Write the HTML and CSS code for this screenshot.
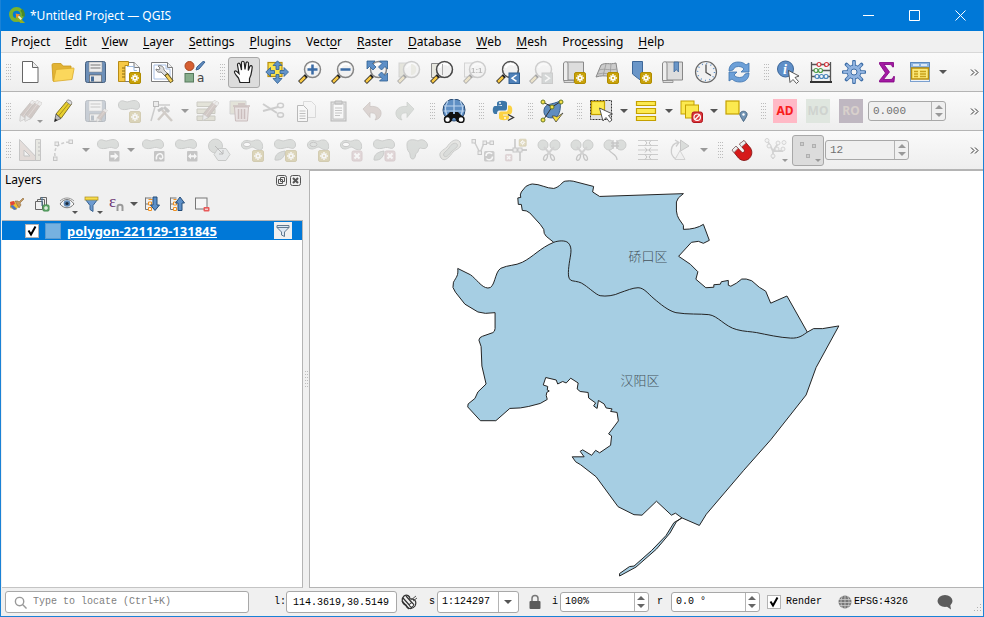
FILE: index.html
```html
<!DOCTYPE html>
<html lang="en">
<head>
<meta charset="utf-8">
<title>*Untitled Project — QGIS</title>
<link rel="stylesheet" href="styles.css">
</head>
<body>
<svg class="defs" aria-hidden="true">
  <defs>
    <g id="star"><rect x="12.5" y="12.5" width="11" height="11" rx="1.5" fill="#c9a20a" stroke="#b08c00"/><path d="M18 14v8M14 18h8M15.500 15.500l5 5M20.500 15.500l-5 5" stroke="#fff" stroke-width="1.500"/><circle cx="18" cy="18" r="1" fill="#c9a20a"/></g>
    <g id="cross"><rect x="13" y="13" width="10" height="10" rx="1.500" fill="#dba0a8" stroke="#c08088"/><path d="M15.500 15.500l5 5M20.500 15.500l-5 5" stroke="#fff" stroke-width="2"/></g>
    <g id="lens"><path d="M8.500 15.500L1.500 22.500" stroke="#222" stroke-width="4"/><path d="M7 17L2 22" stroke="#f6c744" stroke-width="2.500"/><circle cx="14.500" cy="9.500" r="8" fill="#f1f1f1" stroke="#858585" stroke-width="1.500"/><path d="M9.500 8a5.500 5.500 0 0 1 9-2.500" fill="none" stroke="#fff" stroke-width="2"/></g>
    <path id="blob" d="M1.500 6C1.500 2 5 1 8 2.500C11 4 13 1.500 17 1.500C21 1.500 22.500 4 22.500 7C22.500 10 20 11 17.500 10C14 8.500 13 10 9 10.500C4 11 1.500 9.500 1.500 6Z" fill="#a9b5ab" stroke="#7d857f"/>
    <path id="ring" d="M1.500 7C1.500 3 6 1.500 10 3C13 4 14 1.500 18 2C21.500 2.500 23 6 22.500 10C22 13 17 12 14 9.500C11 8 10 11 6 11C3 11 1.500 9.500 1.500 7Z" fill="#a9b5ab" stroke="#7d857f"/>
    <g id="disk"><rect x="1.500" y="1.500" width="20" height="21" rx="2" fill="#6d8fb8" stroke="#46607f"/><rect x="5" y="2" width="13" height="10" fill="#eee" stroke="#888" stroke-width=".5"/><path d="M6.500 5h10M6.500 8h10" stroke="#777"/><rect x="5.500" y="15" width="12" height="7" fill="#e8e8e8" stroke="#555" stroke-width=".6"/><rect x="7" y="16.500" width="3" height="5" fill="#4a6e98"/></g>
    <g id="brownpen"><path d="M3.500 15.500L15 1.500L20 4L9 19.500L3 22Z" fill="#a87868" stroke="#765" stroke-width=".8"/><path d="M15 1.500l5 2.500l-2 3l-5-3Z" fill="#ddd"/><path d="M3.500 16l5 3.500L3 22.500Z" fill="#ddd" stroke="#888" stroke-width=".5"/><path d="M6 17.500L17 3" stroke="#c9a89a"/></g>
    <g id="scroll"><path d="M4.500 2h17v18h-17Z" fill="#ddd" stroke="#888"/><path d="M1.500 4c0-3 4.500-3 4.500 0v16.500h-4.500Z" fill="#eee" stroke="#888"/><path d="M2 22.500h10v-2H2Z" fill="#ddd" stroke="#888" stroke-width=".8"/></g>
    <g id="snip"><circle cx="6" cy="7" r="5" fill="#a9b5ab" stroke="#7d857f"/><circle cx="18" cy="7" r="5" fill="#a9b5ab" stroke="#7d857f"/><path d="M7 9l7 8M17 9l-7 8" stroke="#999" stroke-width="2"/><ellipse cx="8.500" cy="19.500" rx="1.600" ry="3" transform="rotate(25 8.500 19.500)" fill="none" stroke="#777" stroke-width="1.300"/><ellipse cx="15.500" cy="19.500" rx="1.600" ry="3" transform="rotate(-25 15.500 19.500)" fill="none" stroke="#777" stroke-width="1.300"/></g>
  </defs>

  <symbol id="i-logo" viewBox="0 0 18 18"><circle cx="8" cy="8" r="6" fill="none" stroke="#7ab32e" stroke-width="4"/><path d="M13 3A7 7 0 0 1 15 10" fill="none" stroke="#4c8a28" stroke-width="3"/><path d="M8 8l9 9h-5l-5-6Z" fill="#93b023"/><path d="M7 7l5 1l-4 4Z" fill="#f08a24"/><path d="M10 10l3 3" stroke="#eef3d0" stroke-width="2"/></symbol>
  <symbol id="i-new" viewBox="0 0 24 24"><path d="M4.500 1.500h10l5.500 6v15h-15.500Z" fill="#fff" stroke="#666"/><path d="M14.500 1.500v6h5.500" fill="#eee" stroke="#666"/></symbol>
  <symbol id="i-open" viewBox="0 0 24 24"><path d="M1 5q0-1.500 1.500-1.500H10l2 2.500h8v3L3 21H2Z" fill="#e2b334" stroke="#c9981a" stroke-width=".8"/><path d="M5 9.500L22.500 8q.8 0 .5 1L21 19.500L2.500 21.500Z" fill="#fbd75c" stroke="#d9a92a" stroke-width=".8"/></symbol>
  <symbol id="i-save" viewBox="0 0 24 24"><use href="#disk"/></symbol>
  <symbol id="i-layout" viewBox="0 0 24 24"><path d="M7 2.500h10l5.500 5v14H7Z" fill="#fff" stroke="#7d7d7d"/><path d="M17 2.500v5h5.500" fill="#eee" stroke="#7d7d7d"/><path d="M10 6.500h7v4h3" fill="none" stroke="#9fbbe0"/><path d="M1.500 1.500h10v4H8v16H1.500Z" fill="#f7c945" stroke="#b78b16"/><path d="M5 8h3M5 11h3M5 14h3M5 17h3" stroke="#8b6b10"/><use href="#star"/></symbol>
  <symbol id="i-manager" viewBox="0 0 24 24"><path d="M1.500 2.500h16l5 5v14h-21Z" fill="#fff" stroke="#7d7d7d"/><path d="M17.500 2.500v5h5" fill="#eee" stroke="#7d7d7d"/><path d="M4 5h12v4h4v10H4Z" fill="none" stroke="#a9c0e4"/><path d="M8 6c2-1 6 0 6 4l5 5l-2 3l-6-6c-3 1-5-1-5-3l3 1l1-2Z" fill="#ddd" stroke="#666" stroke-width=".8"/><path d="M16 14l6 8" stroke="#5c5320" stroke-width="4"/><path d="M16.500 15l5 6.500" stroke="#f6d05b" stroke-width="2.500"/></symbol>
  <symbol id="i-style" viewBox="0 0 24 24"><circle cx="6.500" cy="6" r="4.500" fill="#d65f32" stroke="#a84620"/><path d="M13 10l3-1l6-7l-2-.5l-6 5.500Z" fill="#5f8cc0" stroke="#355f92"/><rect x="2" y="13.500" width="8.500" height="8.500" fill="#87ad8c" stroke="#567a5c"/><text x="14" y="22" class="glyph">a</text></symbol>

  <symbol id="i-pan" viewBox="0 0 24 24"><path d="M8 22.500L6.500 18C4 15 2 13 2.500 11.500C3.500 10 5 11.500 7 13.500L5.500 5C5.300 3 7.500 2.500 8.200 4.500L9.500 10L9.500 2.500C9.700 .8 12 .8 12.200 2.500L13 9.500L14 3C14.500 1.300 16.700 1.800 16.500 3.500L16.300 10.500L17.800 6.500C18.500 5 20.500 5.500 20.200 7.500C19.500 12 19.500 15 17.500 18.500V22.500Z" fill="#fff" stroke="#222" stroke-width="1.200"/></symbol>
  <symbol id="i-panto" viewBox="0 0 24 24"><rect x="3" y="2.500" width="14" height="14" fill="#fbe34c" stroke="#b98f0c" stroke-width="1.200"/><path d="M12.500 .8L17 5.500H14V9.500H11V5.500H8ZM12.500 23.500L17 18.500H14V14.500H11V18.500H8ZM.8 12L5.500 7.500V10.500H9.500V13.500H5.500V16.500ZM23.500 12L19 7.500V10.500H15V13.500H19V16.500Z" fill="#6393c8" stroke="#2f5f92" stroke-width=".8"/></symbol>
  <symbol id="i-zin" viewBox="0 0 24 24"><use href="#lens"/><path d="M14.500 4.500v10M9.500 9.500h10" stroke="#3a6ba5" stroke-width="2.500"/></symbol>
  <symbol id="i-zout" viewBox="0 0 24 24"><use href="#lens"/><path d="M9.500 9.500h10" stroke="#3a6ba5" stroke-width="2.500"/></symbol>
  <symbol id="i-zfull" viewBox="0 0 24 24"><use href="#lens"/><path d="M3 1h8l-2.500 2.500l3.500 3.500l-3 3l-3.500-3.500L3 9ZM23.500 1h-8l2.500 2.500l-3.500 3.500l3 3l3.500-3.500l2.500 2.500ZM23.500 21h-8l2.500-2.500l-3.500-3.500l3-3l3.500 3.500l2.500-2.500Z" fill="#5d8fc7" stroke="#2f5f92" stroke-width=".8"/></symbol>
  <symbol id="i-zsel" viewBox="0 0 24 24"><rect x="2" y="3" width="11" height="14" fill="#c7c79a" stroke="#999"/><use href="#lens"/><path d="M14 4v11c7 0 7-11 0-11" fill="#d9d9b8"/></symbol>
  <symbol id="i-zlayer" viewBox="0 0 24 24"><path d="M1.500 3.500h11v14h-11Z" fill="#e8e8e0" stroke="#888"/><use href="#lens"/><path d="M12.500 4v11" stroke="#aaa"/><circle cx="14.500" cy="9.500" r="8" fill="none" stroke="#444" stroke-width="1.200"/></symbol>
  <symbol id="i-znative" viewBox="0 0 24 24"><rect x="1.500" y="3" width="10" height="14" fill="#eee" stroke="#999"/><use href="#lens"/><text x="8" y="13" class="glyph-s">1:1</text></symbol>
  <symbol id="i-zlast" viewBox="0 0 24 24"><use href="#lens"/><circle cx="14.500" cy="9.500" r="8" fill="none" stroke="#444"/><rect x="13" y="13" width="10.500" height="10.500" fill="#4f81b9" stroke="#2f5f92"/><path d="M20.500 15l-4.500 3.200l4.500 3.200" fill="none" stroke="#fff" stroke-width="1.500"/></symbol>
  <symbol id="i-znext" viewBox="0 0 24 24"><use href="#lens"/><rect x="13" y="13" width="10.500" height="10.500" fill="#9aa" stroke="#888"/><path d="M16 15l4.500 3.200l-4.500 3.200" fill="none" stroke="#fff" stroke-width="1.500"/></symbol>
  <symbol id="i-newmap" viewBox="0 0 24 24"><use href="#scroll"/><use href="#star"/></symbol>
  <symbol id="i-new3d" viewBox="0 0 24 24"><path d="M6 5c5-3 8 0 15-2l2 13c-8 2-12-2-22 1Z" fill="#ccc" stroke="#888"/><path d="M4 10c6-2 10 1 18-1M3 14c6-2 11 1 19-1M11 4L8 16M16 4l-1 12" fill="none" stroke="#999" stroke-width=".8"/><use href="#star"/></symbol>
  <symbol id="i-newbm" viewBox="0 0 24 24"><path d="M4.500 1.500h10v20L9.500 18L4.500 14Z" fill="#6a96c8" stroke="#3d6799"/><use href="#star"/></symbol>
  <symbol id="i-showbm" viewBox="0 0 24 24"><use href="#scroll"/><path d="M13 2h4.500v10l-2.200-2.500L13 12Z" fill="#6a96c8" stroke="#3d6799" stroke-width=".8"/></symbol>
  <symbol id="i-clock" viewBox="0 0 24 24"><circle cx="12" cy="12" r="10.500" fill="#f1f1f1" stroke="#666" stroke-width="1.200"/><circle cx="12" cy="12" r="8.500" fill="none" stroke="#5d8fc7" stroke-width="1.500" stroke-dasharray="1 3.450"/><path d="M12 4.500V12.500l5 3" fill="none" stroke="#444" stroke-width="1.200"/></symbol>
  <symbol id="i-refresh" viewBox="0 0 24 24"><path id="rf" d="M2 11C2 5 6 2 11 2c4 0 6 1 8 3l3-2v9h-8l3-3c-2-3-9-4-11 1Z" fill="#6da0d8" stroke="#3f73ad" stroke-width=".8"/><use href="#rf" transform="rotate(180 12 12)"/></symbol>

  <symbol id="i-info" viewBox="0 0 24 24"><circle cx="9.500" cy="9" r="8" fill="#5f8fc8" stroke="#3d6799"/><text x="7" y="14" class="glyph-i">i</text><path d="M12.500 10.500l1.500 12l3-3l3.500 4l2-2l-3.500-4l4-1.500Z" fill="#fff" stroke="#333" stroke-width=".8"/></symbol>
  <symbol id="i-abacus" viewBox="0 0 24 24"><path d="M2.500 2v20M21.500 2v20M2.500 4.500h19M2.500 10.500h19M2.500 16.500h19" stroke="#555" stroke-width="1.300"/><path d="M1 22h22" stroke="#333" stroke-width="2"/><g fill="#f6f6f6" stroke-width="1.200"><g stroke="#d2363c"><circle cx="10" cy="4.500" r="2"/><circle cx="17.500" cy="4.500" r="2"/></g><g stroke="#4f9f4a"><circle cx="7" cy="10.500" r="2"/><circle cx="11.500" cy="10.500" r="2"/></g><g stroke="#4b86bd"><circle cx="8" cy="16.500" r="2"/><circle cx="12.500" cy="16.500" r="2"/><circle cx="17" cy="16.500" r="2"/></g></g></symbol>
  <symbol id="i-gear" viewBox="0 0 24 24"><path d="M12 1.500v21M1.500 12h21M4.500 4.500l15 15M19.500 4.500l-15 15" stroke="#3f6fa8" stroke-width="3.600" stroke-linecap="round"/><circle cx="12" cy="12" r="7" fill="#8fb2df" stroke="#3f6fa8"/><path d="M12 2v20M2 12h20M5 5l14 14M19 5L5 19" stroke="#8fb2df" stroke-width="2" stroke-linecap="round"/><circle cx="12" cy="12" r="3" fill="#f4f4f4" stroke="#3f6fa8"/></symbol>
  <symbol id="i-sigma" viewBox="0 0 24 24"><path d="M4.500 2.500H18.500V7H17.500C17 5 16 4.500 14 4.500H9L14.500 12L8.500 19.500H15C17 19.500 18 18.500 18.500 16.500H19.500L19 22H4.500V20.500L10.500 13L4.500 4Z" fill="#a31aa3" stroke="#800080" stroke-width=".8"/></symbol>
  <symbol id="i-table" viewBox="0 0 24 24"><rect x="2.500" y="2.500" width="19" height="19" fill="#eef3fa" stroke="#7ba0cf"/><path d="M2.500 2.500h19v5h-19Z" fill="#8db4df" stroke="#5b88bd"/><path d="M5 5h6M13 5h6" stroke="#dce9f7" stroke-width="2"/><rect x="3.500" y="8" width="17" height="11" fill="#fbe97a" stroke="#b98f0c" stroke-width="1.500"/><path d="M6 11.500h4M12 11.500h6M6 14h4M12 14h6M6 16.500h4M12 16.500h6" stroke="#caa21c" stroke-width="1.300"/></symbol>

  <symbol id="i-edits" viewBox="0 0 24 24"><g transform="translate(-1 0)"><use href="#brownpen"/></g><g transform="translate(4 0)"><use href="#brownpen"/></g></symbol>
  <symbol id="i-pencil" viewBox="0 0 24 24"><path d="M5 15L15.500 2.500L20.500 5L10 19.500Z" fill="#e8cf2e" stroke="#75651a" stroke-width=".9"/><path d="M7.500 17L18 4" stroke="#a8921c"/><path d="M15 2.500L17 .8Q20.500 1 21 4l-1.500 2Z" fill="#ddd" stroke="#777" stroke-width=".7"/><path d="M5 15l5 4.500L3.500 22.500Z" fill="#bbb" stroke="#444" stroke-width=".7"/><path d="M4.200 19.500l2.300 1.700L3.500 22.800Z" fill="#222"/></symbol>
  <symbol id="i-saveedit" viewBox="0 0 24 24"><use href="#disk"/><g transform="translate(11 9) scale(.62)"><use href="#brownpen"/></g></symbol>
  <symbol id="i-addpoly" viewBox="0 0 24 24"><use href="#blob"/><use href="#star"/></symbol>
  <symbol id="i-vertex" viewBox="0 0 24 24"><path d="M1 22L5.500 6H20" fill="none" stroke="#888" stroke-width="1.500"/><rect x="3.500" y="2.500" width="5" height="5" fill="#ddd" stroke="#555"/><path d="M8 21L18 10M12 11l10 11" stroke="#a08870" stroke-width="2.500"/><path d="M14 8l5 5M8 12l5-3" stroke="#777" stroke-width="3"/></symbol>
  <symbol id="i-multi" viewBox="0 0 24 24"><path d="M2 3h18v4.500H2ZM2 10h18v4.500H2ZM2 17h18v4.500H2Z" fill="#c8c48e" stroke="#86835a"/><g transform="translate(5 0) scale(.95)"><use href="#brownpen"/></g></symbol>
  <symbol id="i-trash" viewBox="0 0 24 24"><path d="M2 2h16v13H2Z" fill="#c8c48e" stroke="#999"/><path d="M6.500 8h14l-1 14h-12Z" fill="#e4c4c4" stroke="#a05858"/><path d="M5 7h17M10 5h7M10.500 10v10M13.500 10v10M16.500 10v10" stroke="#a05858" stroke-width="1.500"/></symbol>
  <symbol id="i-cut" viewBox="0 0 24 24"><path d="M2 5l14 9M2 12l15-4" stroke="#888" stroke-width="2"/><ellipse cx="19.500" cy="6.500" rx="3" ry="2.200" fill="none" stroke="#888" stroke-width="1.500"/><ellipse cx="19.500" cy="16" rx="3" ry="2.200" fill="none" stroke="#888" stroke-width="1.500"/></symbol>
  <symbol id="i-copy" viewBox="0 0 24 24"><path d="M9.500 2.500h8l4 4v12h-12Z" fill="#f5f5f5" stroke="#aaa"/><path d="M3.500 6.500h6l4 4v12h-10Z" fill="#fff" stroke="#555"/><path d="M5.500 12h6M5.500 14.500h6M5.500 17h6M5.500 19.500h6" stroke="#666"/></symbol>
  <symbol id="i-paste" viewBox="0 0 24 24"><rect x="4" y="3" width="15" height="19" fill="#bbb" stroke="#555"/><path d="M6 5h11v15H6Z" fill="#fff" stroke="#777"/><path d="M8 2h7v3H8Z" fill="#999" stroke="#555"/><path d="M8 9h7M8 11.500h7M8 14h7M8 16.500h5" stroke="#777"/></symbol>
  <symbol id="i-undo" viewBox="0 0 24 24"><path d="M3 10l7-7v4.500c7-1 12 3 11 8c-.5 3-3 5-6 5.500c3-4 0-8-5-7v4.500Z" fill="#c39a8c" stroke="#8d6a5e" stroke-width=".7"/></symbol>
  <symbol id="i-redo" viewBox="0 0 24 24"><path d="M21 10l-7-7v4.500c-7-1-12 3-11 8c.5 3 3 5 6 5.500c-3-4 0-8 5-7v4.500Z" fill="#a5b7a5" stroke="#7d8d7d" stroke-width=".7"/></symbol>
  <symbol id="i-metasearch" viewBox="0 0 24 24"><circle cx="12" cy="11" r="11" fill="#5f8fc4" stroke="#2a4a70"/><path d="M2 7h20M1.500 12h21M12 0v15M6 2c-4 6-3 10-1 14M18 2c4 6 3 10 1 14" fill="none" stroke="#bcd4ee" stroke-width="1.200"/><path d="M8 13h3v2h2v-2h3l6 6l-3 4h-4l-2-4h-2l-2 4H6l-4-4Z" fill="#111"/><circle cx="5.500" cy="20.500" r="3" fill="#fff" stroke="#111" stroke-width="1.500"/><circle cx="19" cy="20.500" r="3" fill="#fff" stroke="#111" stroke-width="1.500"/></symbol>
  <symbol id="i-python" viewBox="0 0 24 24"><path d="M6 7V4c0-3 10-3 10 0v5c0 2-1 2.500-3 2.500H8.500C6.500 11.500 6 13 6 15H4C1 15 1 7 4 7h7V6Z" fill="#3d77a8"/><circle cx="9" cy="4" r=".9" fill="#fff"/><path d="M17 6.500h2c3 0 3 9 0 9H12v1h6V19c0 3-10 3-10 0v-4c0-2 1-2.500 3-2.500h4c2 0 2-2 2-6Z" fill="#fbd243"/><circle cx="14" cy="19" r=".9" fill="#fff"/><path d="M17 15.500l5.500 3l-5.500 3" fill="none" stroke="#333" stroke-width="1.300"/></symbol>
  <symbol id="i-geom" viewBox="0 0 24 24"><path d="M4 11c1-7 8-5 16-9c1 6 0 14-4 16c-5 2-13 1-12-7Z" fill="#5f8dc0" stroke="#365f8d"/><path d="M3 3l9 5L20 3M4 20L12 8" fill="none" stroke="#333"/><g fill="#f4e04a" stroke="#6a7a20"><circle cx="3" cy="3" r="2"/><circle cx="21" cy="3" r="2"/><circle cx="12" cy="8" r="2"/><circle cx="3" cy="21" r="2"/></g><path d="M12 17l4 6l7-9l-6 4l-2-1Z" fill="#f9e13d" stroke="#444" stroke-width=".8"/></symbol>
  <symbol id="i-select" viewBox="0 0 24 24"><rect x="1.500" y="1.500" width="21" height="19" fill="#e2e2e2" stroke="#333" stroke-dasharray="2 1"/><rect x="2.500" y="2.500" width="13" height="13" fill="#fce94f" stroke="#c4a000" stroke-width="1.200"/><path d="M10.500 9l3.500 13l3-3.500l3.500 4.500l2.500-2l-3.500-4.500l4-1.500Z" fill="#fff" stroke="#444" stroke-width=".9"/></symbol>
  <symbol id="i-selall" viewBox="0 0 24 24"><path d="M2.500 2.500h19v4h-19ZM2.500 9.500h19v5h-19ZM2.500 17.500h19v4h-19Z" fill="#fce94f" stroke="#c4a000" stroke-width="1.200"/></symbol>
  <symbol id="i-desel" viewBox="0 0 24 24"><rect x="2" y="2" width="13" height="13" fill="#fce94f" stroke="#c4a000"/><rect x="6.500" y="6" width="13" height="13" fill="#fce94f" stroke="#c4a000"/><rect x="13" y="13" width="10.500" height="10.500" rx="2" fill="#d9363c" stroke="#b0151c"/><circle cx="18.200" cy="18.200" r="3.200" fill="none" stroke="#fff" stroke-width="1.200"/><path d="M16 20.500l4.500-4.500" stroke="#fff" stroke-width="1.200"/></symbol>
  <symbol id="i-selloc" viewBox="0 0 24 24"><rect x="2" y="2" width="13" height="13" fill="#fce94f" stroke="#c4a000" stroke-width="1.200"/><path d="M19.500 22.500c-3-5-4-6-3.500-8c1-3 6-3 7 0c.5 2-1 4-3.500 8Z" fill="#7294b5" stroke="#466581"/><circle cx="19.500" cy="15.500" r="1.200" fill="#fff"/></symbol>

  <symbol id="i-cad" viewBox="0 0 24 24"><path d="M1.500 1.500L21.500 22.500H1.500Z M6 12v6h6Z" fill="#d8b0a0" fill-rule="evenodd" stroke="#777"/><path d="M17.500 1.500h5v21h-5Z" fill="#ced0b4" stroke="#777"/><path d="M20 5h2M20 9h2M20 13h2M20 17h2" stroke="#666"/></symbol>
  <symbol id="i-curve" viewBox="0 0 24 24"><path d="M4 18C3 12 5 5 18 4" fill="none" stroke="#888" stroke-width="1.500" stroke-dasharray="3 2"/><g fill="#ddd" stroke="#777"><rect x="2.500" y="19" width="3.500" height="3.500"/><rect x="4" y="4" width="3.500" height="3.500"/><rect x="18" y="2" width="3.500" height="3.500"/></g></symbol>
  <symbol id="i-move" viewBox="0 0 24 24"><use href="#blob"/><rect x="13" y="13" width="10.500" height="10.500" rx="1" fill="#777"/><path d="M14.500 17h4v-2.500l4 3.800l-4 3.800V19.500h-4Z" fill="#fff"/></symbol>
  <symbol id="i-rot" viewBox="0 0 24 24"><use href="#blob"/><rect x="13" y="13" width="10.500" height="10.500" rx="1" fill="#777"/><path d="M15.500 21.500c-1-5 4-8 6-4c1 3-2 5-3 2" fill="none" stroke="#fff" stroke-width="1.500"/></symbol>
  <symbol id="i-scale" viewBox="0 0 24 24"><use href="#blob"/><rect x="13" y="13" width="10.500" height="10.500" rx="1" fill="#777"/><path d="M14 18.300l3-3v2h3v-2l3 3l-3 3v-2h-3v2Z" fill="#fff"/></symbol>
  <symbol id="i-simplify" viewBox="0 0 24 24"><circle cx="8.500" cy="8" r="7" fill="#a9b5ab" stroke="#7d857f"/><path d="M11 10.500h8l4 6l-4 6h-8l-4-6Z" fill="#ccd6da" stroke="#7d857f"/><path d="M8 8l8 8M16 12v4h-4" fill="none" stroke="#555"/></symbol>
  <symbol id="i-addring" viewBox="0 0 24 24"><use href="#ring"/><ellipse cx="7" cy="6.500" rx="3.500" ry="2.200" fill="#fff" stroke="#777"/><use href="#star"/></symbol>
  <symbol id="i-addpart" viewBox="0 0 24 24"><use href="#blob"/><path d="M2 22c0-6 4-8 10-9c0 5-3 10-10 9Z" fill="#a9b5ab" stroke="#7d857f"/><use href="#star"/></symbol>
  <symbol id="i-fillring" viewBox="0 0 24 24"><use href="#ring"/><ellipse cx="7.500" cy="6.500" rx="3.500" ry="2.200" fill="#b5c0b8" stroke="#777"/><use href="#star"/></symbol>
  <symbol id="i-delring" viewBox="0 0 24 24"><use href="#ring"/><ellipse cx="7" cy="6.500" rx="3.500" ry="2.200" fill="#fff" stroke="#777"/><use href="#cross"/></symbol>
  <symbol id="i-delpart" viewBox="0 0 24 24"><use href="#blob"/><path d="M2 22c0-6 4-8 10-9c0 5-3 10-10 9Z" fill="#a9b5ab" stroke="#7d857f"/><use href="#cross"/></symbol>
  <symbol id="i-reshape" viewBox="0 0 24 24"><path d="M2 6c0-5 7-5 11-3c4-3 9 0 9.500 4c0 4-4 4-7 3c-3 0-1 4-4 5c-1 0-1 6-3.500 6C4 21 6 16 4 14C2 12 2 9 2 6Z" fill="#a9b5ab" stroke="#7d857f"/></symbol>
  <symbol id="i-offset" viewBox="0 0 24 24"><path d="M3 20c-4-6 3-8 6-11c3-5 9-10 13-5c3 6-4 7-7 10c-3 4-8 11-12 6Z" fill="#c9c9b8" stroke="#7d857f"/><path d="M6 18c-2-3 3-5 5-8c2-4 6-6 8-4c2 3-3 5-6 8c-2 3-5 6-7 4Z" fill="#a9b5ab" stroke="#7d857f"/></symbol>
  <symbol id="i-split" viewBox="0 0 24 24"><path d="M3 3l6 12L13 5h9" fill="none" stroke="#888" stroke-width="1.500"/><g fill="#ddd" stroke="#777"><rect x="1" y="1.500" width="3.500" height="3.500"/><rect x="7" y="13" width="3.500" height="3.500"/><rect x="12" y="3" width="3.500" height="3.500"/><rect x="19" y="3" width="3.500" height="3.500"/></g><rect x="13" y="13" width="10.500" height="10.500" rx="1.500" fill="#888"/><path d="M15 18c0-4 5-4 6-2M21.500 18.500c0 4-5 4-6 2" fill="none" stroke="#fff" stroke-width="1.500"/></symbol>
  <symbol id="i-reverse" viewBox="0 0 24 24"><path d="M1 12h22M11 1v12M16 12v11" stroke="#888" stroke-width="1.800"/><rect x="9" y="10" width="4" height="4" fill="#ddd" stroke="#777"/><rect x="14" y="10" width="4" height="4" fill="#ddd" stroke="#777"/><g transform="translate(7 -7) scale(.65)"><use href="#star"/></g><g transform="translate(-7 8) scale(.65)"><use href="#cross"/></g></symbol>
  <symbol id="i-snip" viewBox="0 0 24 24"><use href="#snip"/></symbol>
  <symbol id="i-merge" viewBox="0 0 24 24"><circle cx="6" cy="7" r="5" fill="#a9b5ab" stroke="#7d857f"/><circle cx="18" cy="7" r="5" fill="#a9b5ab" stroke="#7d857f"/><path d="M8 5h8M8 8h8M10 2v9M14 2v9M6 12c2 4 8 4 8 10" fill="none" stroke="#777" stroke-width="1.300"/></symbol>
  <symbol id="i-align" viewBox="0 0 24 24"><path d="M2 2.500h20M2 7.500h20M2 12h20M2 16.500h20M2 21.500h20" stroke="#888"/><path d="M9 2.500l2 2.500l-2 2.500M15 2.500l-2 2.500l2 2.500M9 9.500l2 2.500l-2 2.500M15 9.500l-2 2.500l2 2.500M9 16.500l2 2.500l-2 2.500M15 16.500l-2 2.500l2 2.500" fill="none" stroke="#666"/></symbol>
  <symbol id="i-rotsym" viewBox="0 0 24 24"><path d="M7 21C0 17 1 6 9 4.500M6 2l4 2.500l-3 4" fill="none" stroke="#888" stroke-width="1.300"/><path d="M11.500 2v11l8.500-5Z" fill="#a9b5ab" stroke="#777"/><path d="M11 12.500l5 9H6Z" fill="#eee" stroke="#999"/></symbol>
  <symbol id="i-magnet" viewBox="0 0 24 24"><path d="M2 12L6 8l5.500 6c1.500 1.500 4-.5 2.500-2.500L9.500 6L14 2.500l6.500 7.500c5 8-5 17-12 10Z" fill="#d61a1a" stroke="#7a0d0d" stroke-width=".8"/><path d="M2 12L6 8l2 2.500l-4 4ZM9.500 6L14 2.500l2 2.500l-4.500 4Z" fill="#eee" stroke="#777" stroke-width=".6"/></symbol>
  <symbol id="i-topo" viewBox="0 0 24 24"><path d="M4 2l6 11M16 4l-6 9v8M10 13h10" stroke="#999" stroke-width="1.800" fill="none"/><g fill="#eee" stroke="#999"><circle cx="4" cy="2.500" r="2"/><circle cx="6" cy="8" r="2"/><circle cx="15" cy="5" r="2"/><circle cx="21" cy="4.500" r="2"/><circle cx="14" cy="11" r="2"/><circle cx="20" cy="11" r="2"/><circle cx="10" cy="18" r="2"/></g></symbol>
  <symbol id="i-points" viewBox="0 0 24 24"><g fill="#cccccc" stroke="#b0b0b0"><rect x="4.500" y="4.500" width="3" height="3"/><rect x="16.500" y="6.500" width="3" height="3"/><rect x="10.500" y="16.500" width="3" height="3"/></g></symbol>

  <symbol id="l-brush" viewBox="0 0 16 16"><path d="M1 6l4-1l5 5l-3 4l-6-2Z" fill="#f0c030"/><path d="M1 6l4-1l1 3l-4 2Z" fill="#e0453a"/><path d="M1 10l4 4l3-1l-4-4Z" fill="#4d78c0"/><path d="M6 5l3 0l1 1l4-4l1 1l-4 4l1 2l-2 3Z" fill="#c99a5a" stroke="#7d5a2e" stroke-width=".5"/></symbol>
  <symbol id="l-group" viewBox="0 0 16 16"><path d="M1.500 5.500h7v8h-7ZM3.500 5.500v-2h7v8h-2M6.500 3.500v-2h6v8h-2" fill="none" stroke="#666"/><path d="M8 1v9" stroke="#3f6f94"/><rect x="9" y="9" width="6" height="6" rx="1" fill="#6bae75" stroke="#3f8a4b"/><path d="M12 10v4M10 12h4" stroke="#fff"/></symbol>
  <symbol id="l-eye" viewBox="0 0 16 16"><path d="M1 8c4-6 10-6 14 0c-4 5-10 5-14 0Z" fill="#f7f7f7" stroke="#777"/><circle cx="8" cy="7.500" r="3.300" fill="#5d87b5"/><circle cx="8" cy="7.500" r="1.600" fill="#1c2a3a"/><path d="M1 5c4-4 10-4 14 0" fill="none" stroke="#999"/></symbol>
  <symbol id="l-funnel" viewBox="0 0 16 16"><path d="M1.500 3.500h12l-4.500 6v6l-3-2v-4Z" fill="#6d9bd0" stroke="#3a6492"/><rect x="1" y="1" width="13" height="3" fill="#f7dc4c" stroke="#a98c1a" stroke-width=".7"/></symbol>
  <symbol id="l-eps" viewBox="0 0 16 16"><text x="0" y="11" class="glyph-e">ε</text><path d="M8.500 15v-4c0-3 5-3 5 0v4" fill="none" stroke="#999" stroke-width="2"/></symbol>
  <symbol id="l-expand" viewBox="0 0 16 16"><path d="M1.500 1.500v12M1.500 2h6M1.500 8h3M1.500 13.500h3" stroke="#777" fill="none"/><path d="M4.500 3.500h4M4.500 6h3v3h-3ZM4.500 11.500h3v3h-3Z" stroke="#f09020" fill="#fff3df"/><path d="M9 1h4v8h2.500L11 14.500L6.500 9H9Z" fill="#5d8fc7" stroke="#244c78"/></symbol>
  <symbol id="l-collapse" viewBox="0 0 16 16"><path d="M1.500 1.500v12M1.500 2h6M1.500 8h3M1.500 13.500h3" stroke="#777" fill="none"/><path d="M4.500 3.500h3M4.500 6h3v3h-3ZM4.500 11.500h3v3h-3Z" stroke="#f09020" fill="#fff3df"/><path d="M9 14.500h4V7h2.500L11 1L6.500 7H9Z" fill="#5d8fc7" stroke="#244c78"/></symbol>
  <symbol id="l-remove" viewBox="0 0 16 16"><rect x="1.500" y="2" width="11.500" height="11" fill="#f6f6f6" stroke="#777"/><rect x="9.500" y="11" width="6" height="4.500" rx="1" fill="#e85a5a"/><path d="M11 13.200h3" stroke="#fff"/></symbol>
</svg>

<div class="window">
  <header class="titlebar">
    <svg class="logo"><use href="#i-logo"/></svg>
    <h1>*Untitled Project — QGIS</h1>
    <button class="win" aria-label="Minimize"><svg viewBox="0 0 11 11"><path d="M0 5.500h11"/></svg></button>
    <button class="win" aria-label="Maximize"><svg viewBox="0 0 11 11"><path d="M.5 .5h10v10h-10Z"/></svg></button>
    <button class="win" aria-label="Close"><svg viewBox="0 0 11 11"><path d="M.5 .5l10 10M10.500 .5l-10 10"/></svg></button>
  </header>

  <nav class="menubar">
    <button>Pro<u>j</u>ect</button><button><u>E</u>dit</button><button><u>V</u>iew</button><button><u>L</u>ayer</button><button><u>S</u>ettings</button><button><u>P</u>lugins</button><button>Vect<u>o</u>r</button><button><u>R</u>aster</button><button><u>D</u>atabase</button><button><u>W</u>eb</button><button><u>M</u>esh</button><button>Pro<u>c</u>essing</button><button><u>H</u>elp</button>
  </nav>

  <div class="toolbar">
    <i class="grip"></i>
    <button class="tool" aria-label="New Project"><svg><use href="#i-new"/></svg></button>
    <button class="tool" aria-label="Open Project"><svg><use href="#i-open"/></svg></button>
    <button class="tool" aria-label="Save Project"><svg><use href="#i-save"/></svg></button>
    <button class="tool" aria-label="New Print Layout"><svg><use href="#i-layout"/></svg></button>
    <button class="tool" aria-label="Layout Manager"><svg><use href="#i-manager"/></svg></button>
    <button class="tool" aria-label="Style Manager"><svg><use href="#i-style"/></svg></button>
    <i class="grip"></i>
    <button class="tool checked" aria-label="Pan Map"><svg><use href="#i-pan"/></svg></button>
    <button class="tool" aria-label="Pan to Selection"><svg><use href="#i-panto"/></svg></button>
    <button class="tool" aria-label="Zoom In"><svg><use href="#i-zin"/></svg></button>
    <button class="tool" aria-label="Zoom Out"><svg><use href="#i-zout"/></svg></button>
    <button class="tool" aria-label="Zoom Full"><svg><use href="#i-zfull"/></svg></button>
    <button class="tool" disabled aria-label="Zoom to Selection"><svg><use href="#i-zsel"/></svg></button>
    <button class="tool" aria-label="Zoom to Layer"><svg><use href="#i-zlayer"/></svg></button>
    <button class="tool" disabled aria-label="Zoom to Native Resolution"><svg><use href="#i-znative"/></svg></button>
    <button class="tool" aria-label="Zoom Last"><svg><use href="#i-zlast"/></svg></button>
    <button class="tool" disabled aria-label="Zoom Next"><svg><use href="#i-znext"/></svg></button>
    <button class="tool" aria-label="New Map View"><svg><use href="#i-newmap"/></svg></button>
    <button class="tool" aria-label="New 3D Map View"><svg><use href="#i-new3d"/></svg></button>
    <button class="tool" aria-label="New Bookmark"><svg><use href="#i-newbm"/></svg></button>
    <button class="tool" aria-label="Show Bookmarks"><svg><use href="#i-showbm"/></svg></button>
    <button class="tool" aria-label="Temporal Controller"><svg><use href="#i-clock"/></svg></button>
    <button class="tool" aria-label="Refresh"><svg><use href="#i-refresh"/></svg></button>
    <i class="grip"></i>
    <button class="tool" aria-label="Identify Features"><svg><use href="#i-info"/></svg></button>
    <button class="tool" aria-label="Field Calculator"><svg><use href="#i-abacus"/></svg></button>
    <button class="tool" aria-label="Toolbox"><svg><use href="#i-gear"/></svg></button>
    <button class="tool" aria-label="Statistical Summary"><svg><use href="#i-sigma"/></svg></button>
    <button class="tool" aria-label="Attribute Table"><svg><use href="#i-table"/></svg></button>
    <button class="drop" aria-label="Table options"></button>
    <button class="more" aria-label="More tools"><svg viewBox="0 0 9 7"><path d="M1 .5l3 3l-3 3M5 .5l3 3l-3 3"/></svg></button>
  </div>

  <div class="toolbar">
    <i class="grip"></i>
    <button class="tool menu" disabled aria-label="Current Edits"><svg><use href="#i-edits"/></svg></button>
    <button class="tool" aria-label="Toggle Editing"><svg><use href="#i-pencil"/></svg></button>
    <button class="tool" disabled aria-label="Save Layer Edits"><svg><use href="#i-saveedit"/></svg></button>
    <button class="tool" disabled aria-label="Add Polygon"><svg><use href="#i-addpoly"/></svg></button>
    <button class="tool" disabled aria-label="Vertex Tool"><svg><use href="#i-vertex"/></svg></button>
    <button class="drop" aria-label="Vertex options"></button>
    <button class="tool" disabled aria-label="Modify Attributes"><svg><use href="#i-multi"/></svg></button>
    <button class="tool" disabled aria-label="Delete Selected"><svg><use href="#i-trash"/></svg></button>
    <button class="tool" disabled aria-label="Cut"><svg><use href="#i-cut"/></svg></button>
    <button class="tool" disabled aria-label="Copy"><svg><use href="#i-copy"/></svg></button>
    <button class="tool" disabled aria-label="Paste"><svg><use href="#i-paste"/></svg></button>
    <button class="tool" disabled aria-label="Undo"><svg><use href="#i-undo"/></svg></button>
    <button class="tool" disabled aria-label="Redo"><svg><use href="#i-redo"/></svg></button>
    <i class="grip"></i>
    <button class="tool" aria-label="MetaSearch"><svg><use href="#i-metasearch"/></svg></button>
    <i class="grip"></i>
    <button class="tool" aria-label="Python Console"><svg><use href="#i-python"/></svg></button>
    <i class="grip"></i>
    <button class="tool" aria-label="Check Geometries"><svg><use href="#i-geom"/></svg></button>
    <i class="grip"></i>
    <button class="tool" aria-label="Select Features"><svg><use href="#i-select"/></svg></button>
    <button class="drop" aria-label="Select options"></button>
    <button class="tool" aria-label="Select All"><svg><use href="#i-selall"/></svg></button>
    <button class="drop" aria-label="Select all options"></button>
    <button class="tool" aria-label="Deselect"><svg><use href="#i-desel"/></svg></button>
    <button class="drop" aria-label="Deselect options"></button>
    <button class="tool" aria-label="Select by Location"><svg><use href="#i-selloc"/></svg></button>
    <i class="grip"></i>
    <button class="tool"><span class="chip ad">AD</span></button>
    <button class="tool"><span class="chip mo">MO</span></button>
    <button class="tool"><span class="chip ro">RO</span></button>
    <span class="spin tb off"><input type="text" value="0.000" disabled aria-label="Value"><span class="steps"><button aria-label="Increase"></button><button aria-label="Decrease"></button></span></span>
    <button class="more" aria-label="More tools"><svg viewBox="0 0 9 7"><path d="M1 .5l3 3l-3 3M5 .5l3 3l-3 3"/></svg></button>
  </div>

  <div class="toolbar">
    <i class="grip"></i>
    <button class="tool" disabled aria-label="Advanced Digitizing"><svg><use href="#i-cad"/></svg></button>
    <button class="tool" disabled aria-label="Digitize Curve"><svg><use href="#i-curve"/></svg></button>
    <button class="drop" aria-label="Curve options"></button>
    <button class="tool" disabled aria-label="Move Feature"><svg><use href="#i-move"/></svg></button>
    <button class="drop" aria-label="Move options"></button>
    <button class="tool" disabled aria-label="Rotate Feature"><svg><use href="#i-rot"/></svg></button>
    <button class="tool" disabled aria-label="Scale Feature"><svg><use href="#i-scale"/></svg></button>
    <button class="tool" disabled aria-label="Simplify Feature"><svg><use href="#i-simplify"/></svg></button>
    <button class="tool" disabled aria-label="Add Ring"><svg><use href="#i-addring"/></svg></button>
    <button class="tool" disabled aria-label="Add Part"><svg><use href="#i-addpart"/></svg></button>
    <button class="tool" disabled aria-label="Fill Ring"><svg><use href="#i-fillring"/></svg></button>
    <button class="tool" disabled aria-label="Delete Ring"><svg><use href="#i-delring"/></svg></button>
    <button class="tool" disabled aria-label="Delete Part"><svg><use href="#i-delpart"/></svg></button>
    <button class="tool" disabled aria-label="Reshape Features"><svg><use href="#i-reshape"/></svg></button>
    <button class="tool" disabled aria-label="Offset Curve"><svg><use href="#i-offset"/></svg></button>
    <button class="tool" disabled aria-label="Reverse Line"><svg><use href="#i-split"/></svg></button>
    <button class="tool" disabled aria-label="Trim/Extend"><svg><use href="#i-reverse"/></svg></button>
    <button class="tool" disabled aria-label="Split Features"><svg><use href="#i-snip"/></svg></button>
    <button class="tool" disabled aria-label="Split Parts"><svg><use href="#i-snip"/></svg></button>
    <button class="tool" disabled aria-label="Merge Features"><svg><use href="#i-merge"/></svg></button>
    <button class="tool" disabled aria-label="Merge Attributes"><svg><use href="#i-align"/></svg></button>
    <button class="tool" disabled aria-label="Rotate Symbols"><svg><use href="#i-rotsym"/></svg></button>
    <button class="drop" aria-label="Rotate options"></button>
    <i class="grip"></i>
    <button class="tool" aria-label="Enable Snapping"><svg><use href="#i-magnet"/></svg></button>
    <button class="tool menu" disabled aria-label="Snapping Layers"><svg><use href="#i-topo"/></svg></button>
    <button class="tool menu checked" aria-label="Snap to Vertex"><svg><use href="#i-points"/></svg></button>
    <span class="spin tb wide off"><input type="text" value="12" disabled aria-label="Tolerance"><span class="steps"><button aria-label="Increase"></button><button aria-label="Decrease"></button></span></span>
    <button class="more" aria-label="More tools"><svg viewBox="0 0 9 7"><path d="M1 .5l3 3l-3 3M5 .5l3 3l-3 3"/></svg></button>
  </div>

  <main class="work">
    <aside class="dock">
      <div class="dock-head">
        <h2>Layers</h2>
        <button aria-label="Float panel"><svg viewBox="0 0 11 11"><rect x=".5" y=".5" width="10" height="10" rx="2"/><path d="M4.500 2.500h4v4h-4ZM2.500 4.500h4v4h-4Z"/></svg></button>
        <button aria-label="Close panel"><svg viewBox="0 0 11 11"><rect x=".5" y=".5" width="10" height="10" rx="2"/><path d="M3 3l5 5M8 3l-5 5" stroke-width="2"/></svg></button>
      </div>
      <div class="dock-tools">
        <button aria-label="Layer Styling"><svg><use href="#l-brush"/></svg></button>
        <button aria-label="Add Group"><svg><use href="#l-group"/></svg></button>
        <button class="menu" aria-label="Manage Map Themes"><svg><use href="#l-eye"/></svg></button>
        <button class="menu" aria-label="Filter Legend"><svg><use href="#l-funnel"/></svg></button>
        <button aria-label="Filter by Expression"><svg><use href="#l-eps"/></svg></button>
        <button class="drop" aria-label="Expression options"></button>
        <button aria-label="Expand All"><svg><use href="#l-expand"/></svg></button>
        <button aria-label="Collapse All"><svg><use href="#l-collapse"/></svg></button>
        <button aria-label="Remove Layer"><svg><use href="#l-remove"/></svg></button>
      </div>
      <div class="tree">
        <div class="row">
          <input type="checkbox" id="layer" checked>
          <span class="swatch"></span>
          <label for="layer">polygon-221129-131845</label>
          <button class="filter" aria-label="Filter"><svg viewBox="0 0 16 16"><path d="M2 2.500h12v2l-4.500 4.500v4.500l-3-1.500V9L2 4.500ZM2 4.500h12" fill="#dbe6f2" stroke="#60788f"/></svg></button>
        </div>
      </div>
    </aside>
    <div class="splitter"><i></i></div>
    <section class="canvas">
      <svg viewBox="310 171 673 417" role="img" aria-label="Map">
        <path class="area" d="M553.500 242.500L546 236.500L544 233.500L543.500 229.500L540 224.500L529.500 213L526 211L522 210.500L521 204.500H518L517.500 198L520.500 197.500L520 195L521 192L525.500 186.500Q530 184 532 184C540 184 546 188.500 553.500 188.500C560 187 562 181.500 565 181.200Q570 180.500 573 181.200L593.500 186.500L592.500 192L599.500 196.500L683.500 193.700Q677 198 676.500 202V211Q677 216 679 219L683.500 225.500V229.500Q696 229.500 703.500 224.500L709.500 240.500L703.500 243.500L698.500 241.500L691.500 242.500L678.700 256.500L690.500 264.500L698 272L696 279.500L706 288L714 287.500V285L720.500 284.500L721.500 282L728.500 280.700V285.500L731 286.500L736.500 283.500L742 279.300H746.500L752 281L759.500 287.500L766 291.500L771 303.500L787.300 296.300L807.700 332.500L814 329H823L839.300 326.300L816.500 368L806.500 395.500L771 440.500L744 471L706.500 515L699.500 526.300L682 518.700L675.500 514L671.500 516L656.500 502L642 516L634 515.500L618 507.500L596 477.500L580.500 465.500L575.500 462.500L572 457.500H584L580 452L582.500 450.500L591.500 456L595.500 451L599.500 453.500L610.500 446L611.500 436.500L608.500 434.500L618.300 421.500L617 413L610.500 412L612 409.500L606 408.500L604 404.500L598.300 401L597 409L593.500 406.500L595.500 403.500L588.500 398.500L588 393L580 392L577 389.500L578 383.500L570.500 378.700L566 383.500L562.500 382L557.500 384.500L556 380.500L545.500 378L543 385.500L547.500 387L547 390.500L549 391.500L546.500 393L546 396L547 400L540 404L528.500 407L520 408.500L509.500 409L495.500 421.300H480L467.300 407.500L467.700 404.500L474.500 399L477.500 392.500L485.700 384.500L481.500 366.500L480.700 347L478.500 340.500Q479 337.500 482 336.700L492.500 333Q494.500 332 494.700 329V313L485 313.700L477.500 312.300L464.500 304.500L455 292.500Q451 288 453 282.500C456 277 458 276 457.300 268.700L470 275C476 279 481 288 487.500 288.300C495 289 494 272 500.500 268.500C508 265 515 266 522 262.500C533 257 540 248 553.500 242.500Z"/>
        <path class="area" d="M682 518.700L674 523.500L666 536.500L651.500 551.500L634 567L629.500 567.500L619.500 574.500V577L636 568L656.500 550L670 534L676.500 522.500Z"/>
        <path class="line" d="M553.500 242.500C557 241 565 240 568 243C573 248 570 256 569 264C568 272 567 280 572 281C577 282 580 282 584 285C590 289 596 295 600 296C606 297 614 296 620 293C626 291 633 288 638 288C644 288 648 294 654 299C660 304 668 311 676 313C688 315 700 314 709 315C718 316 725 327 737 330C744 332 752 332 757 333C767 335 780 338 791 338.500C800 339 804 335 807.700 332.500"/>
        <text x="648" y="261">硚口区</text>
        <text x="640" y="386">汉阳区</text>
      </svg>
    </section>
  </main>

  <footer class="status">
    <span class="locator"><svg viewBox="0 0 14 14"><circle cx="6" cy="6" r="4.500"/><path d="M9.500 9.500l4 4"/></svg><input type="text" placeholder="Type to locate (Ctrl+K)" aria-label="Locate"></span>
    <div class="readout">
      <label class="xy" for="coord">l:</label>
      <input class="coord" id="coord" type="text" value="114.3619,30.5149">
      <button class="extent" aria-label="Toggle extents"><svg viewBox="0 0 16 16"><path d="M2 4l9 10M1 7l7 8M5 2l8 9" stroke="#333" stroke-width="1.200"/><path d="M3 2c3-2 6 0 6 3c5-1 7 3 5 7c-3 4-8 3-9-1C1 10 0 5 3 2Z" fill="none" stroke="#333" stroke-width="1.200"/><circle cx="10.500" cy="11" r="2" fill="#fff" stroke="#333"/><path d="M10 6l5-4M12 7l4-3" stroke="#555"/></svg></button>
      <label for="scale">s</label>
      <select id="scale"><option>1:124297</option></select>
      <button class="lock" aria-label="Lock scale"><svg viewBox="0 0 12 16"><path d="M3 8V4.500C3 .5 9 .5 9 4.500V8" fill="none" stroke="#777" stroke-width="1.500"/><rect x=".5" y="7" width="11" height="8" rx="1" fill="#5c5c5c"/></svg></button>
      <label for="mag">i</label>
      <span class="spin"><input id="mag" type="text" value="100%"><span class="steps"><button aria-label="Increase"></button><button aria-label="Decrease"></button></span></span>
      <label class="rot" for="rot">r</label>
      <span class="spin"><input id="rot" type="text" value="0.0 °"><span class="steps"><button aria-label="Increase"></button><button aria-label="Decrease"></button></span></span>
      <span class="render"><input type="checkbox" id="render" checked><label for="render">Render</label></span>
      <button class="crs"><svg viewBox="0 0 14 14"><circle cx="7" cy="7" r="6.500" fill="#777"/><path d="M1 4.500h12M0 7.500h14M1 10.500h12M7 0v14M4.500 1c-2 4-2 8 0 12M9.500 1c2 4 2 8 0 12" fill="none" stroke="#ccc" stroke-width=".8"/></svg>EPSG:4326</button>
      <button class="msg" aria-label="Messages"><svg viewBox="0 0 16 16"><ellipse cx="8" cy="7" rx="7.500" ry="6" fill="#5c5c5c"/><path d="M9 12l5 3.500l-1-6Z" fill="#5c5c5c"/></svg></button>
      <i class="resize"></i>
    </div>
  </footer>
</div>
</body>
</html>
```
FILE: styles.css
```css
* { box-sizing: border-box; }
html, body { height: 100%; }
body { margin: 0; font: 12px/16px "Noto Sans", "Open Sans", sans-serif; color: #000; background: #f0f0f0; }
button { border: 0; padding: 0; margin: 0; background: none; font: inherit; color: inherit; display: flex; align-items: center; justify-content: center; flex: none; }
button svg { display: block; flex: none; }
input, select { font: inherit; color: inherit; margin: 0; }
.defs { display: none; }

.window { display: flex; flex-direction: column; height: 100vh; border: 1px solid #1a82d6; border-top: 0; overflow: hidden; }

.titlebar { display: flex; align-items: center; height: 31px; flex: none; padding-left: 8px; background: #0078d7; color: #fff; }
.titlebar h1 { flex: 1; margin: 0 0 0 4px; font: inherit; }
.logo { width: 17px; height: 17px; }
.win { width: 46px; height: 31px; }
.win svg { width: 11px; height: 11px; fill: none; stroke: #fff; }

.menubar { display: flex; align-items: center; gap: 15px; height: 22px; flex: none; padding: 0 10px; background: #f0f0f0; border-bottom: 1px solid #d8d8d8; }
.menubar button { display: block; }
.menubar u { text-underline-offset: 2px; }

.toolbar { display: flex; align-items: center; height: 39px; flex: none; background: linear-gradient(#fafafa, #eeeeee); border-bottom: 1px solid #b4b4b4; }
.grip { width: 16px; height: 17px; flex: none; padding: 0 3px 0 8px; }
.grip:first-child { width: 13px; padding-left: 5px; }
.grip::before, .splitter i { content: ""; display: block; height: 100%; background: repeating-linear-gradient(90deg, #bcbcbc 0 1px, transparent 1px 2px); mask: repeating-linear-gradient(#000 0 1px, transparent 1px 3px); }
.tool { position: relative; width: 32px; height: 31px; margin-right: 1px; border: 1px solid transparent; border-radius: 3px; }
.tool svg { width: 24px; height: 24px; }
.tool:disabled svg { opacity: .36; filter: grayscale(.5); }
.checked { background: #dcdcdc; border-color: #a8a8a8; }
.drop { width: 12px; height: 31px; }
.drop::before, .menu::after { content: ""; border: 4px solid transparent; border-top-color: #555; border-bottom: 0; }
.tool:disabled + .drop::before { border-top-color: #999; }
.menu { position: relative; }
.menu::after { position: absolute; right: 2px; bottom: 3px; border-width: 3px; border-bottom: 0; border-top-color: #999; }
.more { width: 18px; height: 31px; margin-left: auto; }
.more svg { width: 9px; height: 7px; fill: none; stroke: #333; }
.glyph { font: 12px "DejaVu Sans", sans-serif; fill: #444; }
.glyph-s { font: bold 8px "Liberation Sans", sans-serif; fill: #555; }
.glyph-i { font: italic bold 14px "Liberation Serif", serif; fill: #fff; }
.glyph-e { font: 17px "Liberation Serif", serif; fill: #6a3070; }
.chip { width: 24px; height: 24px; font-weight: bold; line-height: 24px; }
.ad { background: #ffb9c6; color: #f81c1c; }
.mo { background: #dfe6df; color: #cfd3cf; }
.ro { background: #bfb7c1; color: #d8d0cc; }

.spin { display: flex; width: 89px; height: 20px; border: 1px solid #a8a8a8; border-radius: 3px; background: #fff; font: 10px/18px "Liberation Mono", monospace; }
.spin input { flex: 1; min-width: 0; border: 0; padding: 0 0 0 4px; background: none; }
.spin.tb { width: 78px; }
.spin.wide { width: 84px; }
.spin.off { background: #f0f0f0; color: #707070; font-size: 11px; }
.steps { display: flex; flex-direction: column; justify-content: center; gap: 4px; width: 14px; border-left: 1px solid #b4b4b4; }
.steps button { height: 4px; }
.steps button::before { content: ""; border: 4px solid transparent; border-top: 0; border-bottom-color: #666; }
.steps button + button::before { border-top: 4px solid #666; border-bottom: 0; }
.off .steps button::before { border-bottom-color: #999; }
.off .steps button + button::before { border-top-color: #999; }

.work { display: flex; flex: 1; min-height: 0; }
.dock { display: flex; flex-direction: column; width: 302px; flex: none; }
.dock-head { display: flex; align-items: center; gap: 3px; height: 20px; padding: 0 2px 0 4px; }
.dock-head h2 { flex: 1; margin: 0; font: inherit; }
.dock-head svg { width: 11px; height: 11px; fill: none; stroke: #555; }
.dock-tools { display: flex; align-items: center; height: 30px; padding: 0 3px 2px; }
.dock-tools button { width: 25px; height: 24px; }
.dock-tools svg { width: 16px; height: 16px; }
.dock-tools .drop { width: 10px; }
.dock-tools .menu::after { right: 1px; bottom: 2px; border-top-color: #555; }
.tree { flex: 1; margin-left: 1px; background: #fff; border: 1px solid #b4b4b4; border-left: 0; border-bottom-color: #c4c4c4; }
.row { display: flex; align-items: center; height: 19px; padding: 0 10px 0 23px; background: #0078d7; color: #fff; }
input[type="checkbox"] { appearance: none; width: 14px; height: 14px; flex: none; border: 1px solid #b4b4b4; background: #fff url("data:image/svg+xml,%3Csvg xmlns='http://www.w3.org/2000/svg' viewBox='0 0 12 12'%3E%3Cpath d='M2.500 5.500l2.500 4l4.500-8' fill='none' stroke='%23000' stroke-width='2'/%3E%3C/svg%3E") center / 12px 12px; }
.swatch { width: 16px; height: 16px; margin: 0 6px; background: #76b1e0; border: 1px solid #5a9bd0; }
.row label { flex: 1; font-size: 13px; font-weight: bold; text-decoration: underline; }
.filter { width: 18px; height: 17px; background: #f0f0f0; }
.filter svg { width: 16px; height: 16px; }
.splitter { display: flex; align-items: center; justify-content: center; width: 6px; flex: none; }
.splitter i { width: 3px; height: 17px; }
.canvas { flex: 1; min-width: 0; background: #fff; border: solid #b4b4b4; border-width: 1px 0 1px 1px; }
.canvas svg { display: block; width: 100%; height: 100%; }
.area { fill: #a6cee3; stroke: #232323; stroke-linejoin: round; }
.line { fill: none; stroke: #232323; }
.canvas text { font: 300 13px "Noto Sans CJK SC", sans-serif; text-anchor: middle; fill: #46545c; }

.status { display: flex; align-items: center; height: 28px; flex: none; padding-left: 4px; font: 10px/14px "Liberation Mono", monospace; }
.locator { display: flex; align-items: center; gap: 6px; width: 244px; height: 22px; padding-left: 8px; border: 1px solid #a8a8a8; border-radius: 3px; background: #fff; }
.locator svg { width: 13px; height: 13px; fill: none; stroke: #999; stroke-width: 1.5; }
.locator input { flex: 1; min-width: 0; border: 0; padding: 0; background: none; }
.locator input::placeholder { color: #808080; }
.readout { display: flex; align-items: center; margin-left: auto; }
.readout > label { width: 8px; }
.readout > .xy { width: 12px; }
.readout > .rot { width: 6px; margin: 0 8px; }
.coord { width: 111px; height: 22px; padding: 0 6px; border: 1px solid #a8a8a8; border-radius: 3px; background: #fff; }
.extent { width: 24px; height: 22px; margin-right: 8px; }
.extent svg { width: 16px; height: 16px; }
select { appearance: none; width: 82px; height: 22px; padding: 0 4px; border: 1px solid #a8a8a8; border-radius: 3px; background: #fff url("data:image/svg+xml,%3Csvg xmlns='http://www.w3.org/2000/svg' viewBox='0 0 20 20'%3E%3Cpath d='M.5 0v20' stroke='%23b4b4b4'/%3E%3Cpath d='M6 8h8l-4 4Z' fill='%23555'/%3E%3C/svg%3E") right / 20px 20px no-repeat; }
.lock { width: 33px; height: 22px; }
.lock svg { width: 12px; height: 16px; }
.render { display: flex; align-items: center; gap: 5px; margin-left: 7px; }
.crs { gap: 2px; margin-left: 16px; height: 22px; }
.crs svg { width: 14px; height: 14px; }
.msg { width: 17px; height: 22px; margin: 0 18px 0 28px; }
.msg svg { width: 16px; height: 16px; }
.resize { width: 12px; height: 12px; align-self: flex-end; background: repeating-linear-gradient(90deg, #b0b0b0 0 1px, transparent 1px 3px); mask: repeating-linear-gradient(#000 0 1px, transparent 1px 3px); clip-path: polygon(100% 0, 100% 100%, 0 100%); }
```
